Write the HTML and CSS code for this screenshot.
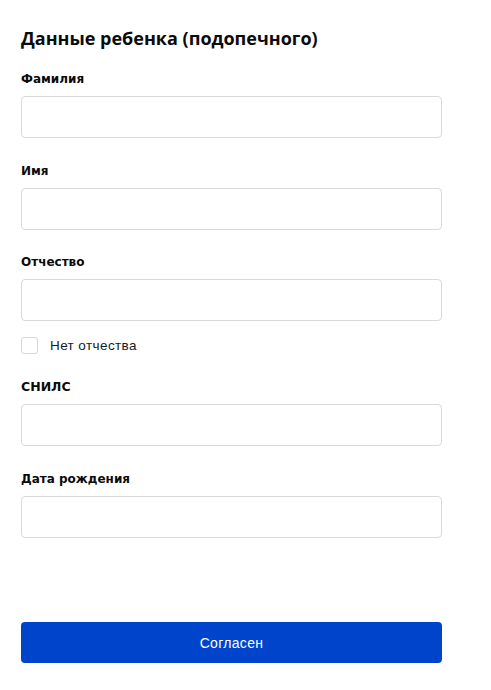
FILE: index.html
```html
<!DOCTYPE html>
<html lang="ru">
<head>
<meta charset="utf-8">
<title>Данные ребенка</title>
<link rel="stylesheet" href="styles.css">
</head>
<body>
<main class="form">
  <h1 class="title">Данные ребенка (подопечного)</h1>
  <div class="field">
    <label class="label">Фамилия</label>
    <div class="input"></div>
  </div>
  <div class="field">
    <label class="label">Имя</label>
    <div class="input"></div>
  </div>
  <div class="field">
    <label class="label">Отчество</label>
    <div class="input"></div>
  </div>
  <div class="check">
    <span class="box"></span>
    <span class="check-text">Нет отчества</span>
  </div>
  <div class="field field-snils">
    <label class="label label-snils">СНИЛС</label>
    <div class="input"></div>
  </div>
  <div class="field">
    <label class="label">Дата рождения</label>
    <div class="input"></div>
  </div>
  <button class="btn">Согласен</button>
</main>
</body>
</html>
```

FILE: styles.css
```css
* { box-sizing: border-box; }
html, body { margin: 0; padding: 0; background: #fff; }
body { font-family: "DejaVu Sans", sans-serif; color: #0b0b0b; }
.form {
  width: 421px;
  margin-left: 21px;
  padding-top: 26px;
  display: flex;
  flex-direction: column;
}
.title {
  margin: 0;
  font-family: "Open Sans", "DejaVu Sans", sans-serif;
  font-size: 18px;
  line-height: 24px;
  font-weight: 700;
}
.field { display: flex; flex-direction: column; }
.field + .field { margin-top: 24.5px; }
.title + .field { margin-top: 21px; }
.label {
  font-size: 12px;
  line-height: 16px;
  font-weight: 700;
  margin-bottom: 9px;
}
.label-snils { font-size: 12.5px; }
.input {
  height: 42px;
  border: 1px solid #d9d9d9;
  border-radius: 4px;
  background: #fff;
}
.check {
  display: flex;
  align-items: center;
  margin-top: 16px;
  height: 17px;
}
.box {
  width: 17px;
  height: 17px;
  border: 1px solid #d6d6d6;
  border-radius: 3px;
}
.check-text {
  margin-left: 12px;
  font-family: "Liberation Sans", sans-serif;
  font-size: 13.5px;
  letter-spacing: 0.4px;
  color: #1a1a1a;
}
.field-snils.field { margin-top: 25px; }
.btn {
  margin-top: 84.5px;
  height: 41px;
  border: 0;
  border-radius: 4px;
  background: #0044cb;
  color: #fff;
  font-family: "Liberation Sans", sans-serif;
  font-size: 14px;
  letter-spacing: 0.3px;
  padding: 0;
}
```
